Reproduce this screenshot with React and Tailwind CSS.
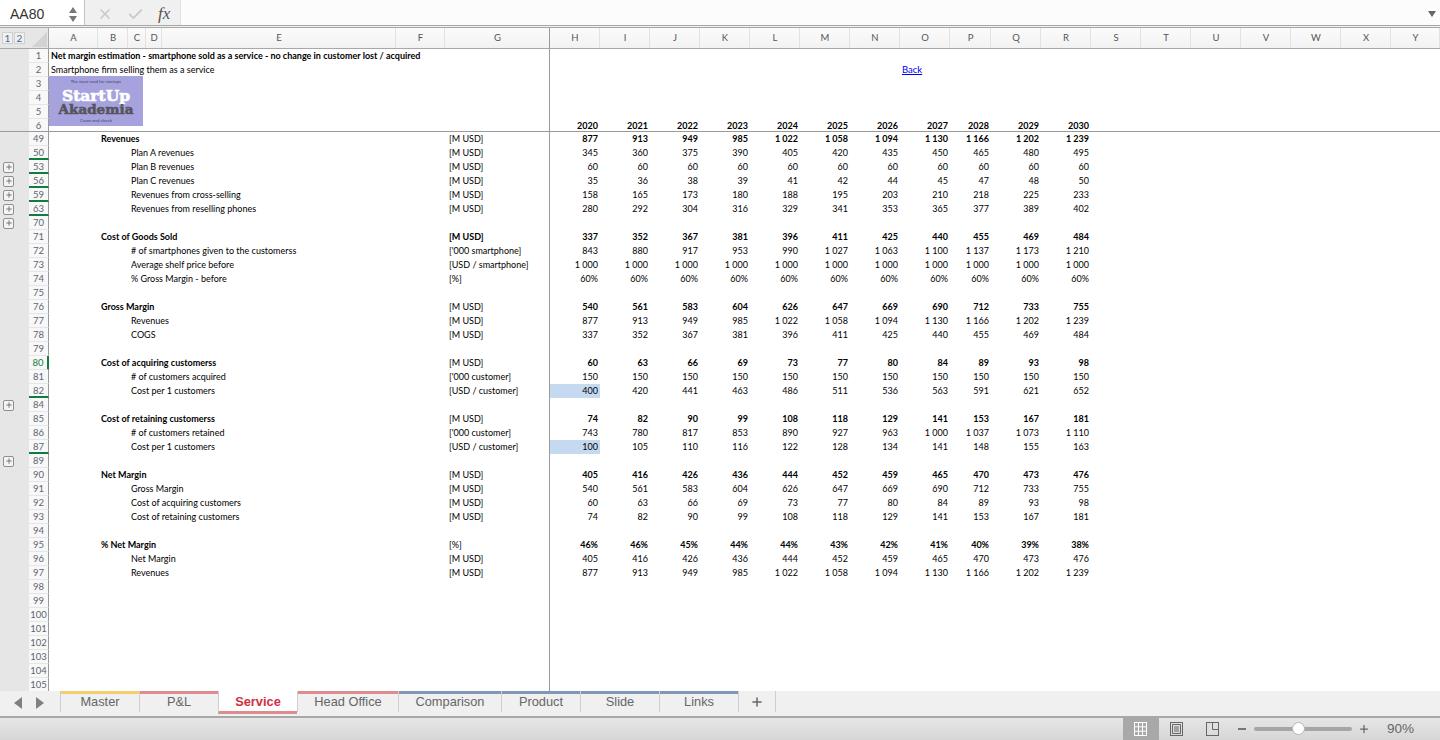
import { X, Check, Plus } from 'lucide-react'

const cellFont = "font-['Lato','Noto_Sans',sans-serif]"
const rowGrid = 'grid grid-cols-[29px_20px_396px_105px_50px_50px_50px_50px_50px_50px_50px_50px_41px_50px_50px_1fr] grid-rows-[14px] h-[14px]'

const columns = [
  ['A', 'w-[49px]'], ['B', 'w-[30px]'], ['C', 'w-[18px]'], ['D', 'w-[16px]'], ['E', 'w-[234px]'],
  ['F', 'w-[49px]'], ['G', 'w-[105px]'], ['H', 'w-[50px]'], ['I', 'w-[50px]'], ['J', 'w-[50px]'],
  ['K', 'w-[50px]'], ['L', 'w-[50px]'], ['M', 'w-[50px]'], ['N', 'w-[50px]'], ['O', 'w-[50px]'],
  ['P', 'w-[41px]'], ['Q', 'w-[50px]'], ['R', 'w-[50px]'], ['S', 'w-[50px]'], ['T', 'w-[50px]'],
  ['U', 'w-[50px]'], ['V', 'w-[50px]'], ['W', 'w-[50px]'], ['X', 'w-[50px]'], ['Y', 'w-[49px]'],
]

const same = (v) => Array(11).fill(v)
const revenues = ['877', '913', '949', '985', '1 022', '1 058', '1 094', '1 130', '1 166', '1 202', '1 239']
const cogs = ['337', '352', '367', '381', '396', '411', '425', '440', '455', '469', '484']
const gross = ['540', '561', '583', '604', '626', '647', '669', '690', '712', '733', '755']
const acquiring = ['60', '63', '66', '69', '73', '77', '80', '84', '89', '93', '98']
const retaining = ['74', '82', '90', '99', '108', '118', '129', '141', '153', '167', '181']
const net = ['405', '416', '426', '436', '444', '452', '459', '465', '470', '473', '476']

// n, label, level, unit, values, flags
const rows = [
  { n: 49, label: 'Revenues', level: 1, unit: '[M USD]', values: revenues },
  { n: 50, label: 'Plan A revenues', level: 2, unit: '[M USD]', values: ['345', '360', '375', '390', '405', '420', '435', '450', '465', '480', '495'], green: true },
  { n: 53, label: 'Plan B revenues', level: 2, unit: '[M USD]', values: same('60'), green: true, plus: true },
  { n: 56, label: 'Plan C revenues', level: 2, unit: '[M USD]', values: ['35', '36', '38', '39', '41', '42', '44', '45', '47', '48', '50'], green: true, plus: true },
  { n: 59, label: 'Revenues from cross-selling', level: 2, unit: '[M USD]', values: ['158', '165', '173', '180', '188', '195', '203', '210', '218', '225', '233'], green: true, plus: true },
  { n: 63, label: 'Revenues from reselling phones', level: 2, unit: '[M USD]', values: ['280', '292', '304', '316', '329', '341', '353', '365', '377', '389', '402'], green: true, plus: true },
  { n: 70, plus: true },
  { n: 71, label: 'Cost of Goods Sold', level: 1, unit: '[M USD]', values: cogs, boldUnit: true },
  { n: 72, label: '# of smartphones given to the customerss', level: 2, unit: "['000 smartphone]", values: ['843', '880', '917', '953', '990', '1 027', '1 063', '1 100', '1 137', '1 173', '1 210'] },
  { n: 73, label: 'Average shelf price before', level: 2, unit: '[USD / smartphone]', values: same('1 000') },
  { n: 74, label: '% Gross Margin - before', level: 2, unit: '[%]', values: same('60%') },
  { n: 75 },
  { n: 76, label: 'Gross Margin', level: 1, unit: '[M USD]', values: gross },
  { n: 77, label: 'Revenues', level: 2, unit: '[M USD]', values: revenues },
  { n: 78, label: 'COGS', level: 2, unit: '[M USD]', values: cogs },
  { n: 79 },
  { n: 80, label: 'Cost of acquiring customerss', level: 1, unit: '[M USD]', values: acquiring, current: true },
  { n: 81, label: '# of customers acquired', level: 2, unit: "['000 customer]", values: same('150') },
  { n: 82, label: 'Cost per 1 customers', level: 2, unit: '[USD / customer]', values: ['400', '420', '441', '463', '486', '511', '536', '563', '591', '621', '652'], green: true, input: true },
  { n: 84, plus: true },
  { n: 85, label: 'Cost of retaining customerss', level: 1, unit: '[M USD]', values: retaining },
  { n: 86, label: '# of customers retained', level: 2, unit: "['000 customer]", values: ['743', '780', '817', '853', '890', '927', '963', '1 000', '1 037', '1 073', '1 110'] },
  { n: 87, label: 'Cost per 1 customers', level: 2, unit: '[USD / customer]', values: ['100', '105', '110', '116', '122', '128', '134', '141', '148', '155', '163'], green: true, input: true },
  { n: 89, plus: true },
  { n: 90, label: 'Net Margin', level: 1, unit: '[M USD]', values: net },
  { n: 91, label: 'Gross Margin', level: 2, unit: '[M USD]', values: gross },
  { n: 92, label: 'Cost of acquiring customers', level: 2, unit: '[M USD]', values: acquiring },
  { n: 93, label: 'Cost of retaining customers', level: 2, unit: '[M USD]', values: retaining },
  { n: 94 },
  { n: 95, label: '% Net Margin', level: 1, unit: '[%]', values: ['46%', '46%', '45%', '44%', '44%', '43%', '42%', '41%', '40%', '39%', '38%'] },
  { n: 96, label: 'Net Margin', level: 2, unit: '[M USD]', values: net },
  { n: 97, label: 'Revenues', level: 2, unit: '[M USD]', values: revenues },
  { n: 98 }, { n: 99 }, { n: 100 }, { n: 101 }, { n: 102 }, { n: 103 }, { n: 104 }, { n: 105 },
]

const tabs = [
  { name: 'Master', w: 'w-[79px]', top: 'bg-[#f0cf6c]' },
  { name: 'P&L', w: 'w-[79px]', top: 'bg-[#dd8c90]' },
  { name: 'Service', w: 'w-[79px]', top: 'bg-white', active: true },
  { name: 'Head Office', w: 'w-[101px]', top: 'bg-[#dd8c90]' },
  { name: 'Comparison', w: 'w-[103px]', top: 'bg-[#7f97b8]' },
  { name: 'Product', w: 'w-[79px]', top: 'bg-[#7f97b8]' },
  { name: 'Slide', w: 'w-[79px]', top: 'bg-[#7f97b8]' },
  { name: 'Links', w: 'w-[79px]', top: 'bg-[#7f97b8]' },
]

function RowNumber({ n, green, current }) {
  return (
    <div
      className={`flex items-center justify-center pt-[2px] text-[9.5px] text-[#5c6670] bg-[#f8f8f8] border-r border-[#9a9a9a] ${
        green ? 'border-b-2 border-b-[#107c41]' : 'border-b border-b-[#e6e6e6]'
      } ${current ? 'border-r-2 border-r-[#107c41] text-[#107c41] bg-[#efefef]' : ''}`}
    >
      {n}
    </div>
  )
}

function Gutter({ plus }) {
  return (
    <div className="bg-[#e6e6e6] flex items-center pl-[3px]">
      {plus && (
        <span className="w-[11px] h-[11px] flex items-center justify-center bg-[#f4f4f4] border border-[#8f8f8f] rounded-[2px] text-[#666]">
          <Plus size={8} strokeWidth={2.5} />
        </span>
      )}
    </div>
  )
}

function DataRow({ row }) {
  const bold = row.level === 1
  return (
    <div className={rowGrid}>
      <Gutter plus={row.plus} />
      <RowNumber n={row.n} green={row.green} current={row.current} />
      <div
        className={`whitespace-nowrap leading-[14px] text-black ${bold ? 'font-bold pl-[52px]' : ''} ${
          row.level === 2 ? 'pl-[82px]' : ''
        }`}
      >
        {row.label}
      </div>
      <div className={`border-r border-[#9a9a9a] pl-[4px] whitespace-nowrap leading-[14px] text-black ${row.boldUnit ? 'font-bold' : ''}`}>
        {row.unit}
      </div>
      {(row.values || same('')).map((v, i) => (
        <div
          key={i}
          className={`text-right pr-[2px] leading-[14px] text-black ${bold ? 'font-bold' : ''} ${
            row.input && i === 0 ? 'bg-[#c5d9f1]' : ''
          }`}
        >
          {v}
        </div>
      ))}
      <div />
    </div>
  )
}

function TopRow({ n, children, years, back }) {
  return (
    <div className={rowGrid}>
      <Gutter />
      <RowNumber n={n} />
      <div className="whitespace-nowrap leading-[14px] pl-[2px] text-black">{children}</div>
      <div className="border-r border-[#9a9a9a]" />
      {same('').map((_, i) => (
        <div key={i} className="text-right pr-[2px] leading-[14px] font-bold text-black">
          {years ? 2020 + i : ''}
          {back && i === 7 && (
            <span className="block text-left pl-[2px] text-[9.5px] font-normal text-[#0000ee] underline">Back</span>
          )}
        </div>
      ))}
      <div />
    </div>
  )
}

function Logo() {
  return (
    <div className="absolute left-[49px] top-[27px] w-[94px] h-[50px] bg-[#a5a2dd] flex flex-col items-center font-['Liberation_Sans',sans-serif]">
      <span className="text-[4px] leading-[5px] mt-[3px] font-bold text-[#5f5d8a]">The most read for startups</span>
      <span className="font-['DejaVu_Serif',serif] font-bold text-white text-[15.5px] leading-[15px] mt-[4px] [-webkit-text-stroke:0.6px_white]">StartUp</span>
      <span className="font-['DejaVu_Serif',serif] font-bold text-[#56555f] text-[13.5px] leading-[13px] [-webkit-text-stroke:0.6px_#56555f]">Akademia</span>
      <span className="text-[4px] leading-[5px] mt-[2px] font-bold text-[#5f5d8a]">Come and check</span>
    </div>
  )
}

function ViewIcon({ kind }) {
  return (
    <svg width="15" height="14" viewBox="0 0 15 14" fill="none" stroke={kind === 'grid' ? '#fff' : '#666'} strokeWidth="1">
      <rect x="1.5" y="0.5" width="12" height="13" />
      {kind === 'grid' && <path d="M1.5 4.8h12M1.5 9.2h12M5.5 0.5v13M9.5 0.5v13" />}
      {kind === 'page' && <path d="M3.5 2.5h8v9h-8zM5 5h5M5 7h5M5 9h5" />}
      {kind === 'break' && <path d="M7.5 0.5v7h6" />}
    </svg>
  )
}

export default function App() {
  return (
    <div className="w-[1440px] h-[740px] overflow-hidden flex flex-col bg-white font-['Liberation_Sans',sans-serif]">
      {/* Formula bar */}
      <div className="h-[28px] shrink-0 flex bg-[#f0f0f0] border-b-[3px] border-double border-[#a8a8a8]">
        <div className="w-[85px] bg-white border-r border-[#c4c4c4] flex items-center justify-between pl-[10px] pr-[7px] pt-[3px]">
          <span className="text-[14px] text-[#333]">AA80</span>
          <span className="flex flex-col gap-[3px]">
            <span className="w-0 h-0 border-x-[4px] border-x-transparent border-b-[6px] border-b-[#777]" />
            <span className="w-0 h-0 border-x-[4px] border-x-transparent border-t-[6px] border-t-[#777]" />
          </span>
        </div>
        <div className="w-[95px] flex items-center pl-[12px] pt-[3px] gap-[14px] text-[#c9c9c9]">
          <X size={16} strokeWidth={2.5} />
          <Check size={17} strokeWidth={2.5} />
          <span className="font-['Liberation_Serif',serif] italic text-[17px] text-[#555]">fx</span>
        </div>
        <div className="flex-1 bg-[#fcfcfc] border-l border-[#e0e0e0] flex items-center justify-end pr-[4px] pt-[2px]">
          <span className="w-0 h-0 border-x-[4px] border-x-transparent border-t-[6px] border-t-[#666]" />
        </div>
      </div>

      {/* Column headers */}
      <div className="h-[21px] shrink-0 flex border-b border-[#a8a8a8] text-[9.5px] text-[#555] font-['Lato',sans-serif]">
        <div className="w-[29px] bg-[#e6e6e6] flex items-center pl-[2px] gap-[1px]">
          <span className="w-[11px] h-[12px] flex items-center justify-center bg-[#f0f0f0] border border-[#d0d0d0] text-[10px] text-[#4a6a90]">1</span>
          <span className="w-[11px] h-[12px] flex items-center justify-center bg-[#f0f0f0] border border-[#d0d0d0] text-[10px] text-[#4a6a90]">2</span>
        </div>
        <div className="w-[20px] bg-[#e6e6e6] border-r border-[#a8a8a8] flex items-end justify-end p-[1px]">
          <span className="w-0 h-0 border-l-[15px] border-l-transparent border-b-[15px] border-b-[#d2d2d2]" />
        </div>
        {columns.map(([name, w]) => (
          <div
            key={name}
            className={`${w} shrink-0 flex items-center justify-center pl-px bg-gradient-to-b from-[#fbfbfb] to-[#f2f2f2] border-r ${
              name === 'G' ? 'border-[#9a9a9a]' : 'border-[#e2e2e2]'
            }`}
          >
            {name}
          </div>
        ))}
      </div>

      {/* Sheet */}
      <div className={`relative h-[642px] shrink-0 overflow-hidden text-[9px] ${cellFont}`}>
        <div className="border-b border-[#9a9a9a] h-[83px] overflow-hidden">
          <TopRow n={1}><span className="font-bold">Net margin estimation - smartphone sold as a service - no change in customer lost / acquired</span></TopRow>
          <TopRow n={2} back>Smartphone firm selling them as a service</TopRow>
          <TopRow n={3} />
          <TopRow n={4} />
          <TopRow n={5} />
          <TopRow n={6} years />
        </div>
        {rows.map((row) => (
          <DataRow key={row.n} row={row} />
        ))}
        <Logo />
      </div>

      {/* Sheet tabs */}
      <div className="h-[27px] shrink-0 flex bg-[#f0f0f0] border-b-2 border-[#a8a8a8] text-[12.8px] text-[#666]">
        <div className="w-[60px] flex items-center pl-[14px] gap-[14px] pb-[2px]">
          <span className="w-0 h-0 border-y-[6px] border-y-transparent border-r-[8px] border-r-[#808080]" />
          <span className="w-0 h-0 border-y-[6px] border-y-transparent border-l-[8px] border-l-[#808080]" />
        </div>
        {tabs.map((tab) => (
          <div
            key={tab.name}
            className={`${tab.w} flex flex-col items-center border-l border-[#cfcfcf] ${
              tab.active ? 'bg-white font-bold text-[#d0303f] h-[23px] border-b-[3px] border-b-[#dd8c90]' : 'h-[21px]'
            }`}
          >
            <span className={`w-full h-[3px] shrink-0 ${tab.top}`} />
            <span className="leading-[16px]">{tab.name}</span>
          </div>
        ))}
        <div className="w-[38px] h-[21px] border-x border-[#cfcfcf] flex items-center justify-center text-[#666]">
          <Plus size={14} strokeWidth={2.5} />
        </div>
      </div>

      {/* Status bar */}
      <div className="flex-1 flex items-center justify-end pr-[26px] bg-gradient-to-b from-[#e6e6e6] to-[#d6d6d6] text-[13.5px] text-[#666]">
        <div className="w-[36px] self-stretch bg-[#a8a8a8] flex items-center justify-center"><ViewIcon kind="grid" /></div>
        <div className="w-[36px] flex justify-center"><ViewIcon kind="page" /></div>
        <div className="w-[36px] flex justify-center"><ViewIcon kind="break" /></div>
        <span className="w-[8px] h-[2px] bg-[#777] ml-[7px]" />
        <div className="relative w-[98px] h-[4px] rounded-full bg-[#a6a6a6] ml-[8px] mr-[6px]">
          <span className="absolute left-[38px] -top-[5px] w-[13px] h-[13px] rounded-full bg-white border border-[#b5b5b5]" />
        </div>
        <Plus size={12} strokeWidth={2.5} />
        <span className="ml-[17px]">90%</span>
      </div>
    </div>
  )
}
